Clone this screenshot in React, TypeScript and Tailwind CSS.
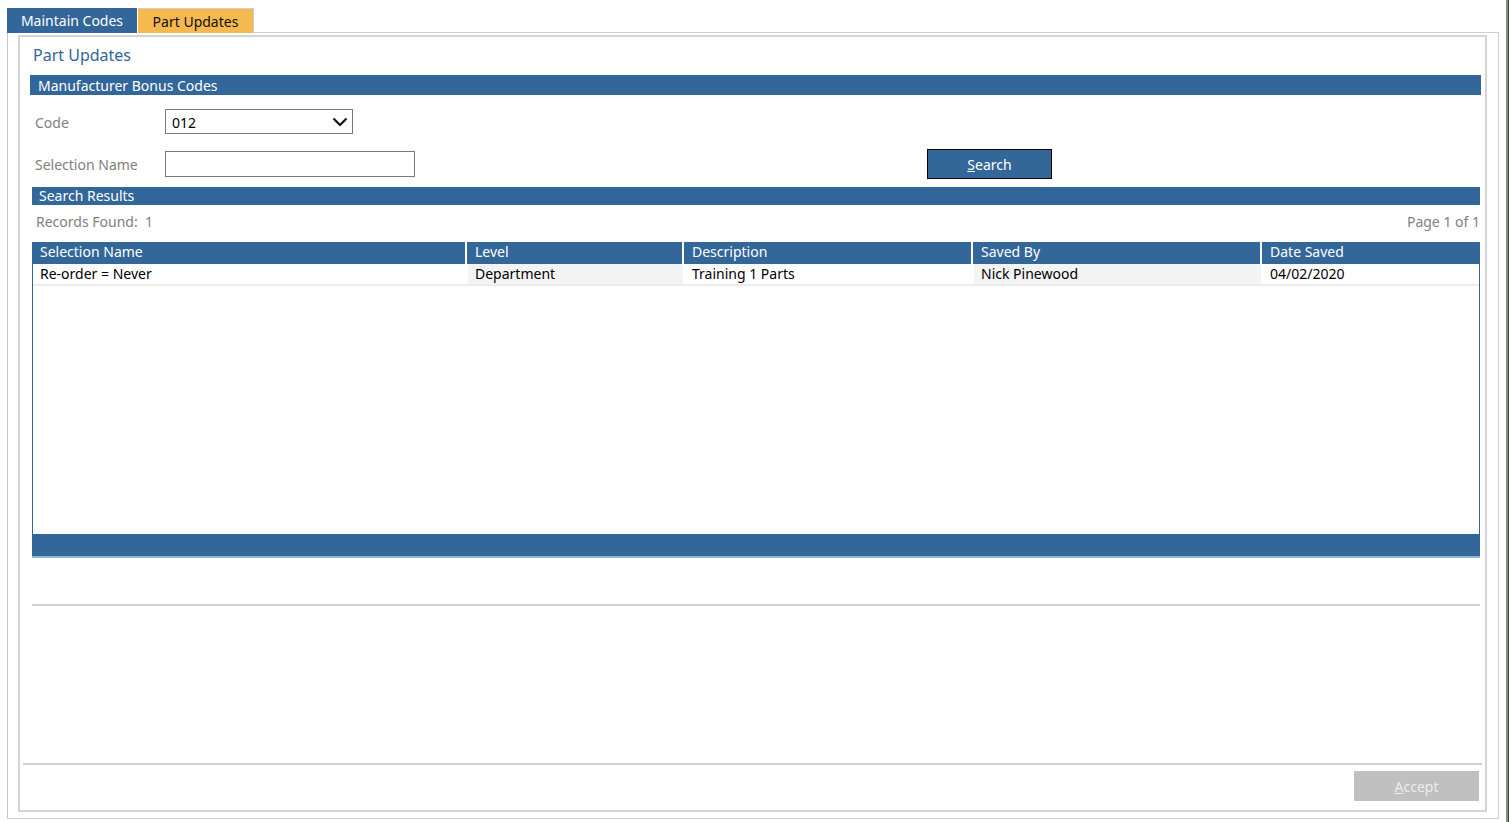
import React from "react";

const columns = [
  { key: "name", label: "Selection Name", width: "w-[435px]" },
  { key: "level", label: "Level", width: "w-[217px]" },
  { key: "desc", label: "Description", width: "w-[289px]" },
  { key: "by", label: "Saved By", width: "w-[289px]" },
  { key: "date", label: "Date Saved", width: "flex-1" },
];

const rows = [
  {
    name: "Re-order = Never",
    level: "Department",
    desc: "Training 1 Parts",
    by: "Nick Pinewood",
    date: "04/02/2020",
  },
];

function SectionBar({ title, className }: { title: string; className: string }) {
  return (
    <div className={`bg-[#336699] text-white text-[14px] leading-none flex items-center ${className}`}>
      {title}
    </div>
  );
}

export default function App() {
  return (
    <div className="relative w-[1509px] h-[822px] bg-white overflow-hidden font-['Noto_Sans',sans-serif] text-[14px] text-[#222]">
      {/* window edge on the right */}
      <div className="absolute right-0 top-0 h-full w-[3px] border-l-2 border-[#8a8a8a] bg-[#2f4a3c]" />

      <div className="pt-[8px] pl-[7px]">
        {/* tabs */}
        <div className="flex h-[25px] w-[1492px]">
          <div className="w-[130px] bg-[#336699] text-white flex items-center justify-center pb-[1px]">Maintain Codes</div>
          <div className="w-[116px] ml-[1px] bg-[#f6b94f] border-t border-r border-[#cfcfcf] text-[#111] flex items-center justify-center pt-[1px]">
            Part Updates
          </div>
          <div className="flex-1 border-b border-[#cfcfcf]" />
        </div>

        {/* outer panel */}
        <div className="w-[1492px] h-[786px] border-l border-r border-b border-[#cfcfcf] border-l-[#c8c8c8] pt-[2px] pl-[10px] pr-[11px] pb-[6px]">
          <div className="h-full border-2 border-[#d4d4d4] flex flex-col">
            <div className="pl-[10px] pr-[4px] flex flex-col">
              <div className="text-[#336699] text-[16px] h-[36px] flex items-center pl-[3px] pb-[1px]">Part Updates</div>

              <SectionBar title="Manufacturer Bonus Codes" className="h-[20px] pl-[8px] mt-[2px] pt-[1px]" />

              {/* code row */}
              <div className="flex items-center h-[25px] mt-[14px]">
                <div className="w-[135px] pl-[5px] text-[#808080] pt-[1px]">Code</div>
                <div className="w-[188px] h-[25px] border border-[#7a7a7a] flex items-center justify-between pl-[6px] pr-[4px] text-black pt-[1px]">
                  <span>012</span>
                  <svg width="16" height="10" viewBox="0 0 16 10">
                    <path d="M1.5 1.5 L8 8 L14.5 1.5" fill="none" stroke="#111" strokeWidth="2.2" />
                  </svg>
                </div>
              </div>

              {/* selection name row */}
              <div className="flex items-center h-[30px] mt-[15px]">
                <div className="w-[135px] pl-[5px] text-[#808080]">Selection Name</div>
                <div className="w-[250px] h-[26px] border border-[#7a7a7a]" />
                <div className="w-[512px]" />
                <button className="w-[125px] h-[30px] bg-[#336699] border border-black text-white flex items-center justify-center">
                  <span>
                    <span className="underline">S</span>earch
                  </span>
                </button>
              </div>

              <SectionBar title="Search Results" className="h-[18px] pl-[7px] mt-[8px] ml-[2px] mr-[1px]" />

              <div className="flex justify-between items-center h-[32px] pl-[4px] pr-[1px] ml-[2px] text-[#808080]">
                <span>Records Found:&nbsp; 1</span>
                <span>Page 1 of 1</span>
              </div>

              {/* results table */}
              <div className="ml-[2px] mr-[1px] mt-[5px] flex flex-col">
                <div className="flex h-[22px] bg-[#336699] text-white">
                  {columns.map((c, i) => (
                    <div
                      key={c.key}
                      className={`${c.width} flex items-center pl-[8px] pb-[3px] ${i < columns.length - 1 ? "border-r-2 border-white" : ""}`}
                    >
                      {c.label}
                    </div>
                  ))}
                </div>
                <div className="h-[270px] border-l border-r border-[#336699] flex flex-col">
                  {rows.map((r) => (
                    <div key={r.name} className="flex h-[22px] border-b-2 border-[#ececec] text-black">
                      {columns.map((c, i) => (
                        <div
                          key={c.key}
                          className={`${c.width} flex items-center pl-[7px] pb-[1px] ${i % 2 === 1 ? "bg-[#f4f4f4]" : "bg-white"} ${i < columns.length - 1 ? "border-r-2 border-white" : ""}`}
                        >
                          {r[c.key as keyof typeof r]}
                        </div>
                      ))}
                    </div>
                  ))}
                </div>
                <div className="h-[24px] bg-[#336699] border-b-2 border-[#8fb4dc]" />
              </div>

              <div className="mt-[46px] ml-[2px] mr-[1px] h-[2px] bg-[#d0d0d0]" />
            </div>

            <div className="flex-1" />

            <div className="mx-[3px] h-[2px] bg-[#d0d0d0]" />
            <div className="flex justify-end pr-[6px] pt-[6px] pb-[9px]">
              <button className="w-[125px] h-[30px] bg-[#c0c0c0] text-[#ececec] flex items-center justify-center">
                <span>
                  <span className="underline">A</span>ccept
                </span>
              </button>
            </div>
          </div>
        </div>
      </div>
    </div>
  );
}
